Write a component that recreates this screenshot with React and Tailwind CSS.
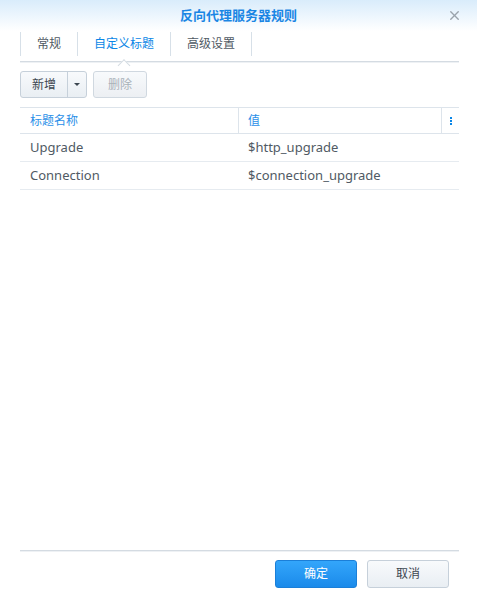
import { X } from "lucide-react";

const FONT = "font-['Noto_Sans','Noto_Sans_CJK_SC',sans-serif]";

const ROWS = [
  { name: "Upgrade", value: "$http_upgrade" },
  { name: "Connection", value: "$connection_upgrade" },
];

function Tab({ label, active }) {
  return (
    <div
      className={
        "relative flex h-6 items-center border-r border-[#d7e0e8] px-[16px] text-[12px] " +
        (active ? "text-[#0a86e6]" : "text-[#505a64]")
      }
    >
      {label}
      {active && (
        <span className="absolute left-1/2 top-[29px] h-[9px] w-[9px] -translate-x-1/2 rotate-45 border-l border-t border-[#d4dbe2] bg-white" />
      )}
    </div>
  );
}

export default function App() {
  return (
    <div className={`flex h-[594px] w-[477px] flex-col bg-white ${FONT}`}>
      {/* title bar */}
      <div className="relative flex h-[31px] shrink-0 items-center justify-center bg-gradient-to-b from-[#d9ecfb] to-white">
        <span className="text-[13px] font-semibold text-[#1a86e4]">反向代理服务器规则</span>
        <X className="absolute right-[15px] top-[8px] h-[15px] w-[15px] text-[#9aa3ab]" strokeWidth={2.2} />
      </div>

      {/* tabs */}
      <div className="ml-[20px] mr-[18px] mt-px shrink-0">
        <div className="flex border-l border-[#d7e0e8]">
          <Tab label="常规" />
          <Tab label="自定义标题" active />
          <Tab label="高级设置" />
        </div>
        <div className="mt-[5px] h-[2px] border-t border-[#d4dbe2] bg-[#eef1f4]" />
      </div>

      {/* toolbar */}
      <div className="ml-[20px] mt-[8px] flex shrink-0 gap-[6px]">
        <div className="flex h-[27px] rounded-[3px] border border-[#c6d0da] bg-gradient-to-b from-[#f8fafc] to-[#e9eef3] text-[12px] text-[#3c4650]">
          <span className="flex w-[47px] items-center justify-center border-r border-[#c6d0da]">新增</span>
          <span className="flex w-[18px] items-center justify-center">
            <span className="h-0 w-0 border-x-[3px] border-t-[3px] border-x-transparent border-t-[#3c4650]" />
          </span>
        </div>
        <div className="flex h-[27px] w-[54px] items-center justify-center rounded-[3px] border border-[#d0d8e0] bg-gradient-to-b from-[#f8fafc] to-[#eceff3] text-[12px] text-[#a9b1b9]">
          删除
        </div>
      </div>

      {/* table */}
      <div className="ml-[20px] mr-[18px] mt-[9px] shrink-0">
        <div className="flex h-[27px] border-y border-[#dde4eb] text-[12px] text-[#2b8fe8]">
          <div className="flex w-[219px] items-center border-r border-[#dde4eb] pl-[10px]">标题名称</div>
          <div className="flex w-[203px] items-center border-r border-[#dde4eb] pl-[9px]">值</div>
          <div className="flex flex-1 flex-col items-center justify-center gap-[1px]">
            <span className="h-[2px] w-[2px] bg-[#0a86e6]" />
            <span className="h-[2px] w-[2px] bg-[#0a86e6]" />
            <span className="h-[2px] w-[2px] bg-[#0a86e6]" />
          </div>
        </div>
        {ROWS.map((row) => (
          <div key={row.name} className="flex h-[28px] border-b border-[#e6ebf0] text-[13px] text-[#505a64]">
            <div className="flex w-[219px] items-center pl-[10px]">{row.name}</div>
            <div className="flex items-center pl-[9px]">{row.value}</div>
          </div>
        ))}
      </div>

      <div className="flex-1" />

      {/* footer */}
      <div className="ml-[20px] mr-[18px] h-[2px] shrink-0 border-t border-[#d4dbe2] bg-[#eef1f4]" />
      <div className="mr-[28px] mt-[8px] mb-[6px] flex shrink-0 justify-end gap-[10px] text-[12px]">
        <button className="flex h-[28px] w-[82px] items-center justify-center rounded-[3px] border border-[#1b7fd8] bg-gradient-to-b from-[#33a6fb] to-[#1a8aea] text-white">
          确定
        </button>
        <button className="flex h-[28px] w-[82px] items-center justify-center rounded-[3px] border border-[#c6d0da] bg-gradient-to-b from-[#f8fafc] to-[#e9eef3] text-[#3c4650]">
          取消
        </button>
      </div>
    </div>
  );
}
